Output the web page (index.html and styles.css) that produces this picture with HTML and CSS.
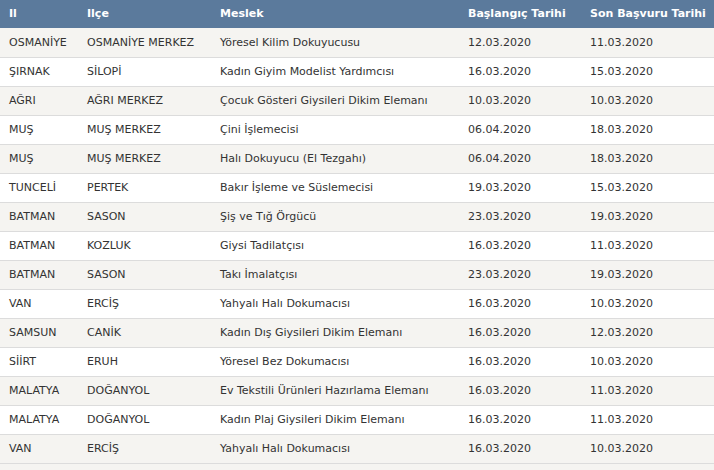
FILE: index.html
```html
<!DOCTYPE html>
<html lang="tr">
<head>
<meta charset="utf-8">
<link rel="stylesheet" href="styles.css">
</head>
<body>
<table class="grid">
  <colgroup>
    <col class="c1"><col class="c2"><col class="c3"><col class="c4"><col class="c5">
  </colgroup>
  <thead>
    <tr><th>Il</th><th>Ilçe</th><th>Meslek</th><th>Başlangıç Tarihi</th><th>Son Başvuru Tarihi</th></tr>
  </thead>
  <tbody>
    <tr><td>OSMANİYE</td><td>OSMANİYE MERKEZ</td><td>Yöresel Kilim Dokuyucusu</td><td>12.03.2020</td><td>11.03.2020</td></tr>
    <tr><td>ŞIRNAK</td><td>SİLOPİ</td><td>Kadın Giyim Modelist Yardımcısı</td><td>16.03.2020</td><td>15.03.2020</td></tr>
    <tr><td>AĞRI</td><td>AĞRI MERKEZ</td><td>Çocuk Gösteri Giysileri Dikim Elemanı</td><td>10.03.2020</td><td>10.03.2020</td></tr>
    <tr><td>MUŞ</td><td>MUŞ MERKEZ</td><td>Çini İşlemecisi</td><td>06.04.2020</td><td>18.03.2020</td></tr>
    <tr><td>MUŞ</td><td>MUŞ MERKEZ</td><td>Halı Dokuyucu (El Tezgahı)</td><td>06.04.2020</td><td>18.03.2020</td></tr>
    <tr><td>TUNCELİ</td><td>PERTEK</td><td>Bakır İşleme ve Süslemecisi</td><td>19.03.2020</td><td>15.03.2020</td></tr>
    <tr><td>BATMAN</td><td>SASON</td><td>Şiş ve Tığ Örgücü</td><td>23.03.2020</td><td>19.03.2020</td></tr>
    <tr><td>BATMAN</td><td>KOZLUK</td><td>Giysi Tadilatçısı</td><td>16.03.2020</td><td>11.03.2020</td></tr>
    <tr><td>BATMAN</td><td>SASON</td><td>Takı İmalatçısı</td><td>23.03.2020</td><td>19.03.2020</td></tr>
    <tr><td>VAN</td><td>ERCİŞ</td><td>Yahyalı Halı Dokumacısı</td><td>16.03.2020</td><td>10.03.2020</td></tr>
    <tr><td>SAMSUN</td><td>CANİK</td><td>Kadın Dış Giysileri Dikim Elemanı</td><td>16.03.2020</td><td>12.03.2020</td></tr>
    <tr><td>SİİRT</td><td>ERUH</td><td>Yöresel Bez Dokumacısı</td><td>16.03.2020</td><td>10.03.2020</td></tr>
    <tr><td>MALATYA</td><td>DOĞANYOL</td><td>Ev Tekstili Ürünleri Hazırlama Elemanı</td><td>16.03.2020</td><td>11.03.2020</td></tr>
    <tr><td>MALATYA</td><td>DOĞANYOL</td><td>Kadın Plaj Giysileri Dikim Elemanı</td><td>16.03.2020</td><td>11.03.2020</td></tr>
    <tr><td>VAN</td><td>ERCİŞ</td><td>Yahyalı Halı Dokumacısı</td><td>16.03.2020</td><td>10.03.2020</td></tr>
  </tbody>
</table>
</body>
</html>
```
FILE: styles.css
```css
html, body {
  margin: 0;
  padding: 0;
  background: #f5f4f1;
}
body {
  font-family: "DejaVu Sans", Verdana, sans-serif;
  font-size: 11px;
  color: #333;
}
.grid {
  width: 714px;
  border-collapse: collapse;
  table-layout: fixed;
}
.c1 { width: 78px; }
.c2 { width: 133px; }
.c3 { width: 248px; }
.c4 { width: 122px; }
.c5 { width: 133px; }
.grid th {
  background: #5b7a9c;
  color: #fff;
  font-weight: bold;
  text-align: left;
  height: 28px;
  padding: 0 0 1px 9px;
  box-sizing: border-box;
}
.grid td {
  height: 29px;
  padding: 0 0 0 9px;
  box-sizing: border-box;
  border-bottom: 1px solid #dcdcdc;
  white-space: nowrap;
}
.grid tbody tr:nth-child(odd) td { background: #f5f4f1; }
.grid tbody tr:nth-child(even) td { background: #fff; }
```
